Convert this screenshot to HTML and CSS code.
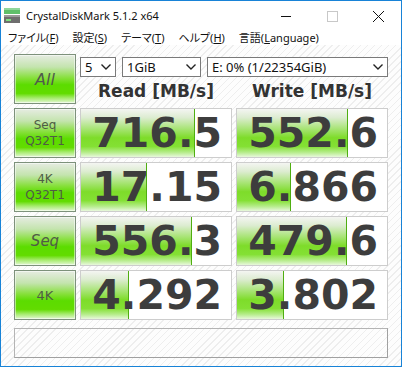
FILE: index.html
```html
<!DOCTYPE html>
<html lang="ja">
<head>
  <meta charset="UTF-8">
  <title>CrystalDiskMark 5.1.2 x64</title>
  <link rel="stylesheet" href="styles.css">
</head>
<body>

  <div class="window">
    <div class="titlebar">
      <svg class="app-icon" width="16" height="16" viewBox="0 0 16 16">
        <rect x="0" y="0" width="16" height="6" fill="#5fbf6a"/>
        <rect x="0" y="0" width="16" height="2" fill="#8fd79a"/>
        <rect x="0" y="7" width="16" height="8" fill="#6e6e6e"/>
        <rect x="0" y="7" width="16" height="2" fill="#9a9a9a"/>
        <rect x="2" y="11" width="5" height="2" fill="#7ee07e"/>
      </svg>
      <span class="title">CrystalDiskMark 5.1.2 x64</span>
      <div class="controls">
        <svg class="ctl" width="46" height="30" viewBox="0 0 46 30"><path d="M18 15.5h10" stroke="#111" stroke-width="1"/></svg>
        <svg class="ctl" width="46" height="30" viewBox="0 0 46 30"><rect x="18.5" y="10.5" width="10" height="10" fill="none" stroke="#c8c8c8" stroke-width="1"/></svg>
        <svg class="ctl" width="46" height="30" viewBox="0 0 46 30"><path d="M18 10l11 11M29 10l-11 11" stroke="#111" stroke-width="1"/></svg>
      </div>
    </div>

    <div class="menubar">
      <span class="menu">ファイル(<u>F</u>)</span>
      <span class="menu">設定(<u>S</u>)</span>
      <span class="menu">テーマ(<u>T</u>)</span>
      <span class="menu">ヘルプ(<u>H</u>)</span>
      <span class="menu">言語(<u>L</u>anguage)</span>
    </div>

    <div class="main">
      <div class="board">
        <div class="btn btn-all">All</div>
        <div class="top">
          <div class="selects">
            <div class="select sel-count">5<svg class="chev" width="10" height="6" viewBox="0 0 10 6"><path d="M0.5 0.5l4.5 4.5l4.5-4.5" fill="none" stroke="#222" stroke-width="1.4"/></svg></div>
            <div class="select sel-size">1GiB<svg class="chev" width="10" height="6" viewBox="0 0 10 6"><path d="M0.5 0.5l4.5 4.5l4.5-4.5" fill="none" stroke="#222" stroke-width="1.4"/></svg></div>
            <div class="select sel-drive">E: 0% (1/22354GiB)<svg class="chev" width="10" height="6" viewBox="0 0 10 6"><path d="M0.5 0.5l4.5 4.5l4.5-4.5" fill="none" stroke="#222" stroke-width="1.4"/></svg></div>
          </div>
          <div class="heads">
            <div class="head">Read [MB/s]</div>
            <div class="head">Write [MB/s]</div>
          </div>
        </div>

        <div class="btn btn-small">Seq<br>Q32T1</div>
        <div class="cell"><div class="bar" style="width: 76%"></div><div class="num">716.5</div></div>
        <div class="cell"><div class="bar" style="width: 74%"></div><div class="num">552.6</div></div>

        <div class="btn btn-small">4K<br>Q32T1</div>
        <div class="cell"><div class="bar" style="width: 44%"></div><div class="num">17.15</div></div>
        <div class="cell"><div class="bar" style="width: 36%"></div><div class="num">6.866</div></div>

        <div class="btn btn-seq">Seq</div>
        <div class="cell"><div class="bar" style="width: 74%"></div><div class="num">556.3</div></div>
        <div class="cell"><div class="bar" style="width: 73%"></div><div class="num">479.6</div></div>

        <div class="btn btn-4k">4K</div>
        <div class="cell"><div class="bar" style="width: 32%"></div><div class="num">4.292</div></div>
        <div class="cell"><div class="bar" style="width: 31%"></div><div class="num">3.802</div></div>
      </div>

      <div class="comment"></div>
    </div>
  </div>

</body>
</html>
```

FILE: styles.css
```css
body {
  margin: 0;
  font-family: "Noto Sans", sans-serif;
  background-color: white;
}

.window {
  width: 402px;
  height: 367px;
  box-sizing: border-box;
  border: 1px solid #1883d7;
  display: flex;
  flex-direction: column;
}

.titlebar {
  height: 29px;
  display: flex;
  align-items: center;
  background-color: white;
}

.app-icon {
  margin-left: 3px;
  margin-right: 6px;
}

.title {
  font-size: 11px;
  color: #111;
  flex: 1;
}

.controls {
  display: flex;
  align-self: flex-start;
}

.ctl {
  display: block;
}

.menubar {
  position: relative;
  z-index: 1;
  height: 15px;
  display: flex;
  align-items: center;
  padding-bottom: 1px;
  box-sizing: border-box;
  background-color: white;
  font-family: "Noto Sans", "Noto Sans CJK JP", sans-serif;
  font-size: 11px;
  font-feature-settings: "palt";
  color: #111;
}

.menu {
  padding: 0 7px;
}

.menu u {
  text-underline-offset: 1px;
}

.main {
  flex: 1;
  padding: 9px 13px 8px 13px;
  background: repeating-linear-gradient(135deg, #fdfdfd 0 4px, #eeeeee 4px 5px);
  display: flex;
  flex-direction: column;
  gap: 8px;
}

.board {
  display: grid;
  grid-template-columns: 62px 152px 152px;
  grid-template-rows: 50px 50px 50px 50px 50px;
  gap: 4px;
}

.btn {
  box-sizing: border-box;
  border: 1px solid #7d917b;
  box-shadow: inset 0 0 0 1px rgba(255,255,255,0.5);
  background: linear-gradient(to bottom, #e6ece2 0%, #c4e4ae 25%, #86e03a 48%, #5cdc00 62%, #62dc00 80%, #a8ec70 90%, #e4f8d4 100%);
  display: flex;
  align-items: center;
  justify-content: center;
  text-align: center;
  font-family: "DejaVu Sans", sans-serif;
  color: #4f5d45;
}

.btn-all {
  font-size: 16px;
  font-style: italic;
  color: #505a4c;
}

.btn-small {
  font-size: 12px;
  line-height: 16px;
}

.btn-seq {
  font-size: 15px;
  font-style: italic;
}

.btn-4k {
  font-size: 13px;
}

.top {
  grid-column: 2 / 4;
  display: flex;
  flex-direction: column;
}

.selects {
  margin-top: 3px;
  display: flex;
  gap: 6px;
}

.select {
  box-sizing: border-box;
  height: 20px;
  border: 1px solid #7a7a7a;
  background-color: white;
  display: flex;
  align-items: center;
  justify-content: space-between;
  padding: 0 4px 0 4px;
  font-size: 13px;
  color: #111;
}

.sel-count {
  width: 36px;
}

.sel-size {
  width: 79px;
}

.sel-drive {
  width: 181px;
}

.heads {
  flex: 1;
  display: grid;
  grid-template-columns: 152px 152px;
  gap: 4px;
}

.head {
  display: flex;
  align-items: center;
  justify-content: center;
  font-family: "DejaVu Sans", sans-serif;
  font-weight: bold;
  font-size: 17px;
  color: #333;
  padding-top: 1px;
}

.cell {
  box-sizing: border-box;
  border: 1px solid #cdcdcd;
  background-color: white;
  display: grid;
}

.bar {
  grid-area: 1 / 1;
  justify-self: start;
  background: linear-gradient(to bottom, #f4f5f2 0%, #dcecd0 18%, #a6e472 42%, #7edc2a 60%, #84e034 78%, #b4ec88 90%, #e8f8dc 100%);
  border-right: 1px solid #4fae10;
  box-sizing: border-box;
}

.num {
  grid-area: 1 / 1;
  display: flex;
  align-items: center;
  justify-content: flex-end;
  padding-right: 9px;
  font-family: "DejaVu Sans", sans-serif;
  font-weight: bold;
  font-size: 41px;
  color: #3d3d3d;
}

.comment {
  height: 30px;
  box-sizing: border-box;
  border: 1px solid #b4b4b4;
  border-right-color: #a0a0a0;
  border-bottom-color: #a0a0a0;
}
```
